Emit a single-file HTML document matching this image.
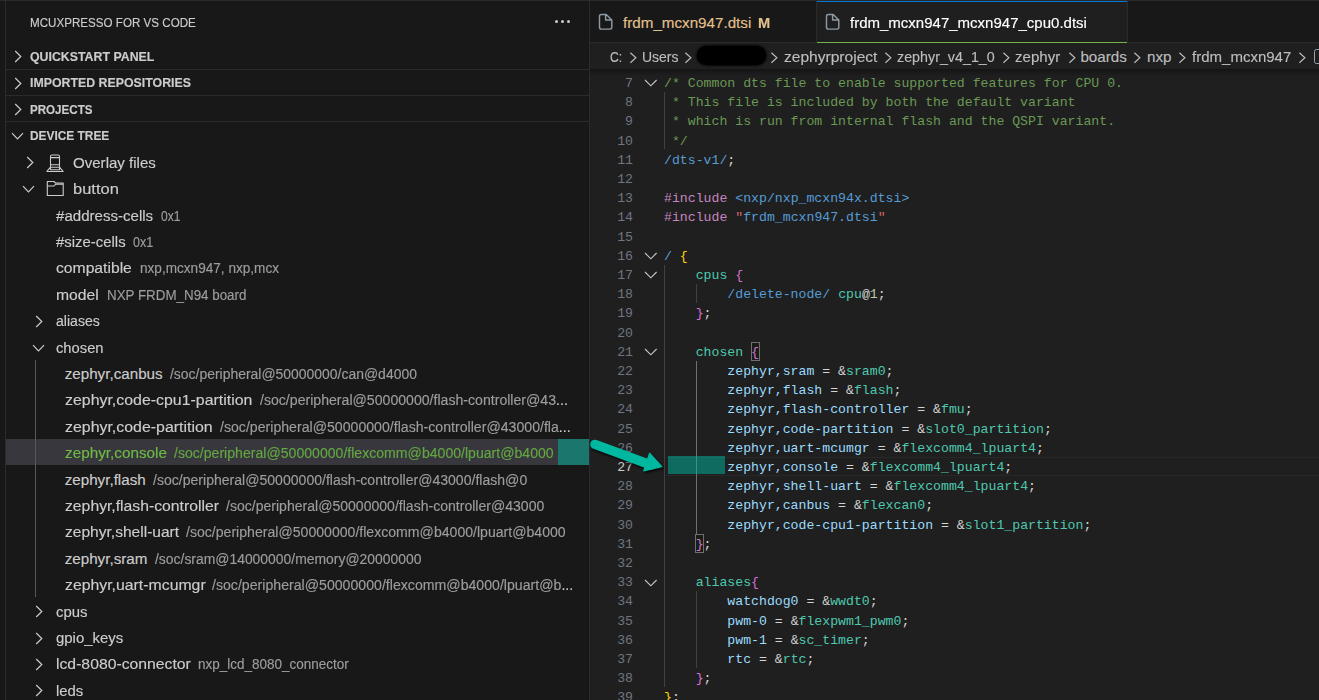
<!DOCTYPE html>
<html><head><meta charset="utf-8"><style>
*{margin:0;padding:0;box-sizing:border-box}
html,body{width:1319px;height:700px;overflow:hidden;background:#181818}
body{position:relative;font-family:"Liberation Sans",sans-serif;color:#cccccc}
.a{position:absolute;white-space:pre;-webkit-text-stroke:0.15px currentColor}
.code,.ln{-webkit-text-stroke:0}
.code{font-family:"Liberation Mono",monospace;font-size:13.2px;line-height:19.2px;color:#d4d4d4}
.ln{font-family:"Liberation Mono",monospace;font-size:13.2px;line-height:19.2px;color:#6e7681;text-align:right;width:40px}
.c{color:#6a9955}.k{color:#569cd6}.p{color:#c586c0}.s{color:#d16969}.t{color:#4ec9b0}.v{color:#9cdcfe}.n{color:#b5cea8}
.y{color:#ffd700}.o{color:#da70d6}
</style></head>
<body>
<div class="a" style="left:0;top:0;width:1319px;height:1px;background:#2b2b2b"></div>
<div class="a" style="left:5px;top:0;width:1px;height:700px;background:#2b2b2b"></div>
<div class="a" style="left:29.90px;top:13.00px;font-size:12.7px;line-height:20px;font-weight:normal;color:#cccccc;transform:scaleX(0.9153);transform-origin:0 0;">MCUXPRESSO FOR VS CODE</div>
<div class="a" style="left:554.80px;top:19.8px;width:3.2px;height:3.2px;border-radius:50%;background:#cccccc"></div>
<div class="a" style="left:560.90px;top:19.8px;width:3.2px;height:3.2px;border-radius:50%;background:#cccccc"></div>
<div class="a" style="left:567.00px;top:19.8px;width:3.2px;height:3.2px;border-radius:50%;background:#cccccc"></div>
<svg class="a" style="left:13.6px;top:50.2px" width="9" height="14" viewBox="0 0 9 14"><path d="M1.2 1 L6.8 6.5 L1.2 12" fill="none" stroke="#cccccc" stroke-width="1.2"/></svg>
<div class="a" style="left:29.50px;top:44.00px;font-size:12.4px;line-height:26.4px;font-weight:bold;color:#cccccc;transform:scaleX(0.9959);transform-origin:0 0;">QUICKSTART PANEL</div>
<div class="a" style="left:6px;top:68.6px;width:583px;height:1px;background:#2b2b2b"></div>
<svg class="a" style="left:13.6px;top:76.6px" width="9" height="14" viewBox="0 0 9 14"><path d="M1.2 1 L6.8 6.5 L1.2 12" fill="none" stroke="#cccccc" stroke-width="1.2"/></svg>
<div class="a" style="left:29.50px;top:70.40px;font-size:12.4px;line-height:26.4px;font-weight:bold;color:#cccccc;transform:scaleX(0.9964);transform-origin:0 0;">IMPORTED REPOSITORIES</div>
<div class="a" style="left:6px;top:95.0px;width:583px;height:1px;background:#2b2b2b"></div>
<svg class="a" style="left:13.6px;top:103.0px" width="9" height="14" viewBox="0 0 9 14"><path d="M1.2 1 L6.8 6.5 L1.2 12" fill="none" stroke="#cccccc" stroke-width="1.2"/></svg>
<div class="a" style="left:29.50px;top:96.80px;font-size:12.4px;line-height:26.4px;font-weight:bold;color:#cccccc;transform:scaleX(0.9351);transform-origin:0 0;">PROJECTS</div>
<div class="a" style="left:6px;top:121.4px;width:583px;height:1px;background:#2b2b2b"></div>
<svg class="a" style="left:10.8px;top:132.39999999999998px" width="14" height="9" viewBox="0 0 14 9"><path d="M1 1.2 L6.5 6.8 L12 1.2" fill="none" stroke="#cccccc" stroke-width="1.2"/></svg>
<div class="a" style="left:29.50px;top:123.20px;font-size:12.4px;line-height:26.4px;font-weight:bold;color:#cccccc;transform:scaleX(0.9591);transform-origin:0 0;">DEVICE TREE</div>
<svg class="a" style="left:26px;top:156.3px" width="9" height="14" viewBox="0 0 9 14"><path d="M1.2 1 L6.8 6.5 L1.2 12" fill="none" stroke="#cccccc" stroke-width="1.2"/></svg>
<svg class="a" style="left:46px;top:153.5px" width="18" height="19" viewBox="0 0 18 19"><path d="M6 0.9 H12 Q13.5 0.9 13.5 2.4 V15.8 H4.5 V2.4 Q4.5 0.9 6 0.9 Z M4.8 3.6 H13.2 M4.8 10.8 H13.2 M4.8 13.3 H13.2 M4.5 13.2 L0.9 17.4 H17.1 L13.5 13.2" fill="none" stroke="#cccccc" stroke-width="1.05" stroke-linejoin="round"/></svg>
<div class="a" style="left:72.50px;top:149.80px;font-size:15.2px;line-height:26.4px;font-weight:normal;color:#cccccc;transform:scaleX(0.9914);transform-origin:0 0;">Overlay files</div>
<svg class="a" style="left:22.2px;top:185.4px" width="14" height="9" viewBox="0 0 14 9"><path d="M1 1.2 L6.5 6.8 L12 1.2" fill="none" stroke="#cccccc" stroke-width="1.2"/></svg>
<svg class="a" style="left:46px;top:180.4px" width="18" height="17" viewBox="0 0 18 17"><path d="M1.3 1.5 H8 L9.5 3 H17.2 V15.5 H1.3 Z M1.3 6 H8 L9.5 4.3 H17.2" fill="none" stroke="#cccccc" stroke-width="1.1" stroke-linejoin="round"/></svg>
<div class="a" style="left:72.50px;top:176.20px;font-size:15.2px;line-height:26.4px;font-weight:normal;color:#cccccc;transform:scaleX(1.0862);transform-origin:0 0;">button</div>
<div class="a" style="left:55.70px;top:202.60px;font-size:15.2px;line-height:26.4px;font-weight:normal;color:#cccccc;transform:scaleX(0.9919);transform-origin:0 0;">#address-cells</div>
<div class="a" style="left:160.90px;top:202.60px;font-size:14px;line-height:26.4px;font-weight:normal;color:#9d9d9d;transform:scaleX(0.8596);transform-origin:0 0;">0x1</div>
<div class="a" style="left:55.70px;top:229.00px;font-size:15.2px;line-height:26.4px;font-weight:normal;color:#cccccc;transform:scaleX(0.9823);transform-origin:0 0;">#size-cells</div>
<div class="a" style="left:132.70px;top:229.00px;font-size:14px;line-height:26.4px;font-weight:normal;color:#9d9d9d;transform:scaleX(0.8951);transform-origin:0 0;">0x1</div>
<div class="a" style="left:55.70px;top:255.40px;font-size:15.2px;line-height:26.4px;font-weight:normal;color:#cccccc;transform:scaleX(1.0326);transform-origin:0 0;">compatible</div>
<div class="a" style="left:139.60px;top:255.40px;font-size:14px;line-height:26.4px;font-weight:normal;color:#9d9d9d;transform:scaleX(0.9708);transform-origin:0 0;">nxp,mcxn947, nxp,mcx</div>
<div class="a" style="left:55.70px;top:281.80px;font-size:15.2px;line-height:26.4px;font-weight:normal;color:#cccccc;transform:scaleX(1.0337);transform-origin:0 0;">model</div>
<div class="a" style="left:106.50px;top:281.80px;font-size:14px;line-height:26.4px;font-weight:normal;color:#9d9d9d;transform:scaleX(0.9547);transform-origin:0 0;">NXP FRDM_N94 board</div>
<svg class="a" style="left:34.5px;top:314.7px" width="9" height="14" viewBox="0 0 9 14"><path d="M1.2 1 L6.8 6.5 L1.2 12" fill="none" stroke="#cccccc" stroke-width="1.2"/></svg>
<div class="a" style="left:56.00px;top:308.20px;font-size:15.2px;line-height:26.4px;font-weight:normal;color:#cccccc;transform:scaleX(0.9257);transform-origin:0 0;">aliases</div>
<svg class="a" style="left:32px;top:343.79999999999995px" width="14" height="9" viewBox="0 0 14 9"><path d="M1 1.2 L6.5 6.8 L12 1.2" fill="none" stroke="#cccccc" stroke-width="1.2"/></svg>
<div class="a" style="left:55.70px;top:334.60px;font-size:15.2px;line-height:26.4px;font-weight:normal;color:#cccccc;transform:scaleX(0.9710);transform-origin:0 0;">chosen</div>
<div class="a" style="left:64.70px;top:361.00px;font-size:15.2px;line-height:26.4px;font-weight:normal;color:#cccccc;">zephyr,canbus</div>
<div class="a" style="left:170.10px;top:361.00px;font-size:14px;line-height:26.4px;font-weight:normal;color:#9d9d9d;transform:scaleX(0.9958);transform-origin:0 0;">/soc/peripheral@50000000/can@d4000</div>
<div class="a" style="left:64.70px;top:387.40px;font-size:15.2px;line-height:26.4px;font-weight:normal;color:#cccccc;transform:scaleX(1.0473);transform-origin:0 0;">zephyr,code-cpu1-partition</div>
<div class="a" style="left:259.60px;top:387.40px;font-size:14px;line-height:26.4px;font-weight:normal;color:#9d9d9d;transform:scaleX(1.0076);transform-origin:0 0;">/soc/peripheral@50000000/flash-controller@43<span style="color:#cccccc">...</span></div>
<div class="a" style="left:64.70px;top:413.80px;font-size:15.2px;line-height:26.4px;font-weight:normal;color:#cccccc;transform:scaleX(1.0475);transform-origin:0 0;">zephyr,code-partition</div>
<div class="a" style="left:219.80px;top:413.80px;font-size:14px;line-height:26.4px;font-weight:normal;color:#9d9d9d;transform:scaleX(1.0089);transform-origin:0 0;">/soc/peripheral@50000000/flash-controller@43000/fla<span style="color:#cccccc">...</span></div>
<div class="a" style="left:6px;top:438.9px;width:583px;height:26.6px;background:#37373d"></div>
<div class="a" style="left:65.00px;top:440.20px;font-size:15.2px;line-height:26.4px;font-weight:normal;color:#6fbb45;transform:scaleX(1.0059);transform-origin:0 0;">zephyr,console</div>
<div class="a" style="left:174.30px;top:440.20px;font-size:14px;line-height:26.4px;font-weight:normal;color:#64a742;transform:scaleX(1.0063);transform-origin:0 0;">/soc/peripheral@50000000/flexcomm@b4000/lpuart@b4000</div>
<div class="a" style="left:64.70px;top:466.60px;font-size:15.2px;line-height:26.4px;font-weight:normal;color:#cccccc;">zephyr,flash</div>
<div class="a" style="left:153.30px;top:466.60px;font-size:14px;line-height:26.4px;font-weight:normal;color:#9d9d9d;transform:scaleX(1.0042);transform-origin:0 0;">/soc/peripheral@50000000/flash-controller@43000/flash@0</div>
<div class="a" style="left:64.70px;top:493.00px;font-size:15.2px;line-height:26.4px;font-weight:normal;color:#cccccc;transform:scaleX(1.0364);transform-origin:0 0;">zephyr,flash-controller</div>
<div class="a" style="left:225.90px;top:493.00px;font-size:14px;line-height:26.4px;font-weight:normal;color:#9d9d9d;transform:scaleX(1.0036);transform-origin:0 0;">/soc/peripheral@50000000/flash-controller@43000</div>
<div class="a" style="left:64.70px;top:519.40px;font-size:15.2px;line-height:26.4px;font-weight:normal;color:#cccccc;transform:scaleX(1.0240);transform-origin:0 0;">zephyr,shell-uart</div>
<div class="a" style="left:186.30px;top:519.40px;font-size:14px;line-height:26.4px;font-weight:normal;color:#9d9d9d;transform:scaleX(1.0063);transform-origin:0 0;">/soc/peripheral@50000000/flexcomm@b4000/lpuart@b4000</div>
<div class="a" style="left:64.70px;top:545.80px;font-size:15.2px;line-height:26.4px;font-weight:normal;color:#cccccc;">zephyr,sram</div>
<div class="a" style="left:154.70px;top:545.80px;font-size:14px;line-height:26.4px;font-weight:normal;color:#9d9d9d;transform:scaleX(0.9936);transform-origin:0 0;">/soc/sram@14000000/memory@20000000</div>
<div class="a" style="left:64.70px;top:572.20px;font-size:15.2px;line-height:26.4px;font-weight:normal;color:#cccccc;transform:scaleX(1.0417);transform-origin:0 0;">zephyr,uart-mcumgr</div>
<div class="a" style="left:212.30px;top:572.20px;font-size:14px;line-height:26.4px;font-weight:normal;color:#9d9d9d;transform:scaleX(1.0094);transform-origin:0 0;">/soc/peripheral@50000000/flexcomm@b4000/lpuart@b<span style="color:#cccccc">...</span></div>
<svg class="a" style="left:34.5px;top:605.0999999999999px" width="9" height="14" viewBox="0 0 9 14"><path d="M1.2 1 L6.8 6.5 L1.2 12" fill="none" stroke="#cccccc" stroke-width="1.2"/></svg>
<div class="a" style="left:55.50px;top:598.60px;font-size:15.2px;line-height:26.4px;font-weight:normal;color:#cccccc;transform:scaleX(0.9812);transform-origin:0 0;">cpus</div>
<svg class="a" style="left:34.5px;top:631.5px" width="9" height="14" viewBox="0 0 9 14"><path d="M1.2 1 L6.8 6.5 L1.2 12" fill="none" stroke="#cccccc" stroke-width="1.2"/></svg>
<div class="a" style="left:55.50px;top:625.00px;font-size:15.2px;line-height:26.4px;font-weight:normal;color:#cccccc;transform:scaleX(0.9833);transform-origin:0 0;">gpio_keys</div>
<svg class="a" style="left:34.5px;top:657.8999999999999px" width="9" height="14" viewBox="0 0 9 14"><path d="M1.2 1 L6.8 6.5 L1.2 12" fill="none" stroke="#cccccc" stroke-width="1.2"/></svg>
<div class="a" style="left:55.50px;top:651.40px;font-size:15.2px;line-height:26.4px;font-weight:normal;color:#cccccc;transform:scaleX(1.0367);transform-origin:0 0;">lcd-8080-connector</div>
<div class="a" style="left:198.00px;top:651.40px;font-size:14px;line-height:26.4px;font-weight:normal;color:#9d9d9d;transform:scaleX(0.9632);transform-origin:0 0;">nxp_lcd_8080_connector</div>
<svg class="a" style="left:34.5px;top:684.3px" width="9" height="14" viewBox="0 0 9 14"><path d="M1.2 1 L6.8 6.5 L1.2 12" fill="none" stroke="#cccccc" stroke-width="1.2"/></svg>
<div class="a" style="left:55.50px;top:677.80px;font-size:15.2px;line-height:26.4px;font-weight:normal;color:#cccccc;transform:scaleX(0.9793);transform-origin:0 0;">leds</div>
<div class="a" style="left:35px;top:359.7px;width:1px;height:237.6px;background:#585858"></div>
<div class="a" style="left:589px;top:0;width:1px;height:700px;background:#2b2b2b"></div>
<div class="a" style="left:590px;top:1px;width:729px;height:41px;background:#181818"></div>
<div class="a" style="left:590px;top:42px;width:729px;height:1px;background:#2b2b2b"></div>
<svg class="a" style="left:598.2px;top:12.5px" width="16" height="19" viewBox="0 0 16 19"><path d="M3.3 1.4 H8.2 L13.8 7 V14.3 Q13.8 16.1 12 16.1 H3.3 Q1.5 16.1 1.5 14.3 V3.2 Q1.5 1.4 3.3 1.4 Z M7.6 1.4 V6.9 H13.8" fill="none" stroke="#8d9aa3" stroke-width="1.45" stroke-linejoin="round"/></svg>
<div class="a" style="left:623.00px;top:1.00px;font-size:15.2px;line-height:43px;font-weight:normal;color:#e2c08d;">frdm_mcxn947.dtsi</div>
<div class="a" style="left:758.40px;top:1.00px;font-size:15px;line-height:43px;font-weight:bold;color:#e2c08d;transform:scaleX(0.9764);transform-origin:0 0;">M</div>
<div class="a" style="left:816px;top:1px;width:312px;height:42px;background:#1f1f1f;border-left:1px solid #2b2b2b;border-right:1px solid #2b2b2b"></div>
<div class="a" style="left:817px;top:0.6px;width:310px;height:1.6px;background:#0078d4"></div>
<div class="a" style="left:817px;top:41.6px;width:310px;height:1.6px;background:#73b54a"></div>
<svg class="a" style="left:825.2px;top:12.5px" width="16" height="19" viewBox="0 0 16 19"><path d="M3.3 1.4 H8.2 L13.8 7 V14.3 Q13.8 16.1 12 16.1 H3.3 Q1.5 16.1 1.5 14.3 V3.2 Q1.5 1.4 3.3 1.4 Z M7.6 1.4 V6.9 H13.8" fill="none" stroke="#8d9aa3" stroke-width="1.45" stroke-linejoin="round"/></svg>
<div class="a" style="left:850.30px;top:1.00px;font-size:15.2px;line-height:43px;font-weight:normal;color:#ffffff;transform:scaleX(0.9881);transform-origin:0 0;">frdm_mcxn947_mcxn947_cpu0.dtsi</div>
<div class="a" style="left:590px;top:43px;width:729px;height:657px;background:#1f1f1f"></div>
<div class="a" style="left:609.50px;top:44.00px;font-size:15.2px;line-height:26px;font-weight:normal;color:#bdbdbd;transform:scaleX(0.8000);transform-origin:0 0;">C:</div>
<div class="a" style="left:642.00px;top:44.00px;font-size:15.2px;line-height:26px;font-weight:normal;color:#bdbdbd;transform:scaleX(0.9197);transform-origin:0 0;">Users</div>
<div class="a" style="left:784.00px;top:44.00px;font-size:15.2px;line-height:26px;font-weight:normal;color:#bdbdbd;transform:scaleX(1.0247);transform-origin:0 0;">zephyrproject</div>
<div class="a" style="left:897.00px;top:44.00px;font-size:15.2px;line-height:26px;font-weight:normal;color:#bdbdbd;transform:scaleX(0.9409);transform-origin:0 0;">zephyr_v4_1_0</div>
<div class="a" style="left:1014.80px;top:44.00px;font-size:15.2px;line-height:26px;font-weight:normal;color:#bdbdbd;transform:scaleX(0.9909);transform-origin:0 0;">zephyr</div>
<div class="a" style="left:1080.40px;top:44.00px;font-size:15.2px;line-height:26px;font-weight:normal;color:#bdbdbd;">boards</div>
<div class="a" style="left:1147.00px;top:44.00px;font-size:15.2px;line-height:26px;font-weight:normal;color:#bdbdbd;">nxp</div>
<div class="a" style="left:1191.70px;top:44.00px;font-size:15.2px;line-height:26px;font-weight:normal;color:#bdbdbd;transform:scaleX(0.9887);transform-origin:0 0;">frdm_mcxn947</div>
<svg class="a" style="left:628.5px;top:52px" width="9" height="12" viewBox="0 0 9 12"><path d="M1.4 0.8 L6.9 5.8 L1.4 10.8" fill="none" stroke="#bdbdbd" stroke-width="1.15"/></svg>
<svg class="a" style="left:684.0px;top:52px" width="9" height="12" viewBox="0 0 9 12"><path d="M1.4 0.8 L6.9 5.8 L1.4 10.8" fill="none" stroke="#bdbdbd" stroke-width="1.15"/></svg>
<svg class="a" style="left:769.5px;top:52px" width="9" height="12" viewBox="0 0 9 12"><path d="M1.4 0.8 L6.9 5.8 L1.4 10.8" fill="none" stroke="#bdbdbd" stroke-width="1.15"/></svg>
<svg class="a" style="left:884.0px;top:52px" width="9" height="12" viewBox="0 0 9 12"><path d="M1.4 0.8 L6.9 5.8 L1.4 10.8" fill="none" stroke="#bdbdbd" stroke-width="1.15"/></svg>
<svg class="a" style="left:1001.5px;top:52px" width="9" height="12" viewBox="0 0 9 12"><path d="M1.4 0.8 L6.9 5.8 L1.4 10.8" fill="none" stroke="#bdbdbd" stroke-width="1.15"/></svg>
<svg class="a" style="left:1067.5px;top:52px" width="9" height="12" viewBox="0 0 9 12"><path d="M1.4 0.8 L6.9 5.8 L1.4 10.8" fill="none" stroke="#bdbdbd" stroke-width="1.15"/></svg>
<svg class="a" style="left:1133.2px;top:52px" width="9" height="12" viewBox="0 0 9 12"><path d="M1.4 0.8 L6.9 5.8 L1.4 10.8" fill="none" stroke="#bdbdbd" stroke-width="1.15"/></svg>
<svg class="a" style="left:1177.5px;top:52px" width="9" height="12" viewBox="0 0 9 12"><path d="M1.4 0.8 L6.9 5.8 L1.4 10.8" fill="none" stroke="#bdbdbd" stroke-width="1.15"/></svg>
<svg class="a" style="left:1297.7px;top:52px" width="9" height="12" viewBox="0 0 9 12"><path d="M1.4 0.8 L6.9 5.8 L1.4 10.8" fill="none" stroke="#bdbdbd" stroke-width="1.15"/></svg>
<div class="a" style="left:697px;top:45.5px;width:69px;height:19px;border-radius:9.5px;background:#000;box-shadow:0 0 2px 1px rgba(0,0,0,.8)"></div>
<div class="a" style="left:1314px;top:49px;width:10px;height:15px;border:1.5px solid #9aa5ad;border-radius:2.5px"></div>
<div class="a" style="left:590px;top:69px;width:729px;height:7px;background:linear-gradient(#141414,#1f1f1f)"></div>
<div class="a" style="left:664px;top:456.5px;width:655px;height:19.2px;border-top:1px solid #282828;border-bottom:1px solid #282828"></div>
<div class="a" style="left:664px;top:91.7px;width:1px;height:57.6px;background:#404040"></div>
<div class="a" style="left:664px;top:264.5px;width:1px;height:422.4px;background:#404040"></div>
<div class="a" style="left:696px;top:283.7px;width:1px;height:19.2px;background:#404040"></div>
<div class="a" style="left:696px;top:360.5px;width:1px;height:173.8px;background:#707070"></div>
<div class="a" style="left:696px;top:590.9px;width:1px;height:76.8px;background:#404040"></div>
<div class="a" style="left:750.6px;top:342.0px;width:9px;height:18.9px;border:1px solid #6f6f6f;background:#161e16"></div>
<div class="a" style="left:695.1px;top:534.0px;width:9px;height:18.9px;border:1px solid #6f6f6f;background:#161e16"></div>
<div class="a ln" style="left:593px;top:74.0px;color:#6e7681">7</div>
<div class="a code" style="left:664px;top:74.0px"><span class="c">/* Common dts file to enable supported features for CPU 0.</span></div>
<div class="a ln" style="left:593px;top:93.2px;color:#6e7681">8</div>
<div class="a code" style="left:664px;top:93.2px"><span class="c"> * This file is included by both the default variant</span></div>
<div class="a ln" style="left:593px;top:112.4px;color:#6e7681">9</div>
<div class="a code" style="left:664px;top:112.4px"><span class="c"> * which is run from internal flash and the QSPI variant.</span></div>
<div class="a ln" style="left:593px;top:131.6px;color:#6e7681">10</div>
<div class="a code" style="left:664px;top:131.6px"><span class="c"> */</span></div>
<div class="a ln" style="left:593px;top:150.8px;color:#6e7681">11</div>
<div class="a code" style="left:664px;top:150.8px"><span class="k">/dts-v1/</span>;</div>
<div class="a ln" style="left:593px;top:170.0px;color:#6e7681">12</div>
<div class="a code" style="left:664px;top:170.0px"></div>
<div class="a ln" style="left:593px;top:189.2px;color:#6e7681">13</div>
<div class="a code" style="left:664px;top:189.2px"><span class="p">#include</span> <span class="k">&lt;nxp/nxp_mcxn94x.dtsi&gt;</span></div>
<div class="a ln" style="left:593px;top:208.4px;color:#6e7681">14</div>
<div class="a code" style="left:664px;top:208.4px"><span class="p">#include</span> <span class="s">&quot;</span><span class="k">frdm_mcxn947.dtsi</span><span class="s">&quot;</span></div>
<div class="a ln" style="left:593px;top:227.6px;color:#6e7681">15</div>
<div class="a code" style="left:664px;top:227.6px"></div>
<div class="a ln" style="left:593px;top:246.8px;color:#6e7681">16</div>
<div class="a code" style="left:664px;top:246.8px"><span class="k">/</span> <span class="y">{</span></div>
<div class="a ln" style="left:593px;top:266.0px;color:#6e7681">17</div>
<div class="a code" style="left:664px;top:266.0px">    <span class="t">cpus</span> <span class="o">{</span></div>
<div class="a ln" style="left:593px;top:285.2px;color:#6e7681">18</div>
<div class="a code" style="left:664px;top:285.2px">        <span class="k">/delete-node/</span> <span class="t">cpu</span>@<span class="n">1</span>;</div>
<div class="a ln" style="left:593px;top:304.4px;color:#6e7681">19</div>
<div class="a code" style="left:664px;top:304.4px">    <span class="o">}</span>;</div>
<div class="a ln" style="left:593px;top:323.6px;color:#6e7681">20</div>
<div class="a code" style="left:664px;top:323.6px"></div>
<div class="a ln" style="left:593px;top:342.8px;color:#6e7681">21</div>
<div class="a code" style="left:664px;top:342.8px">    <span class="t">chosen</span> <span class="o">{</span></div>
<div class="a ln" style="left:593px;top:362.0px;color:#6e7681">22</div>
<div class="a code" style="left:664px;top:362.0px">        <span class="v">zephyr,sram</span> = &amp;<span class="t">sram0</span>;</div>
<div class="a ln" style="left:593px;top:381.2px;color:#6e7681">23</div>
<div class="a code" style="left:664px;top:381.2px">        <span class="v">zephyr,flash</span> = &amp;<span class="t">flash</span>;</div>
<div class="a ln" style="left:593px;top:400.4px;color:#6e7681">24</div>
<div class="a code" style="left:664px;top:400.4px">        <span class="v">zephyr,flash-controller</span> = &amp;<span class="t">fmu</span>;</div>
<div class="a ln" style="left:593px;top:419.6px;color:#6e7681">25</div>
<div class="a code" style="left:664px;top:419.6px">        <span class="v">zephyr,code-partition</span> = &amp;<span class="t">slot0_partition</span>;</div>
<div class="a ln" style="left:593px;top:438.8px;color:#6e7681">26</div>
<div class="a code" style="left:664px;top:438.8px">        <span class="v">zephyr,uart-mcumgr</span> = &amp;<span class="t">flexcomm4_lpuart4</span>;</div>
<div class="a ln" style="left:593px;top:458.0px;color:#cccccc">27</div>
<div class="a code" style="left:664px;top:458.0px">        <span class="v">zephyr,console</span> = &amp;<span class="t">flexcomm4_lpuart4</span>;</div>
<div class="a ln" style="left:593px;top:477.2px;color:#6e7681">28</div>
<div class="a code" style="left:664px;top:477.2px">        <span class="v">zephyr,shell-uart</span> = &amp;<span class="t">flexcomm4_lpuart4</span>;</div>
<div class="a ln" style="left:593px;top:496.4px;color:#6e7681">29</div>
<div class="a code" style="left:664px;top:496.4px">        <span class="v">zephyr,canbus</span> = &amp;<span class="t">flexcan0</span>;</div>
<div class="a ln" style="left:593px;top:515.6px;color:#6e7681">30</div>
<div class="a code" style="left:664px;top:515.6px">        <span class="v">zephyr,code-cpu1-partition</span> = &amp;<span class="t">slot1_partition</span>;</div>
<div class="a ln" style="left:593px;top:534.8px;color:#6e7681">31</div>
<div class="a code" style="left:664px;top:534.8px">    <span class="o">}</span>;</div>
<div class="a ln" style="left:593px;top:554.0px;color:#6e7681">32</div>
<div class="a code" style="left:664px;top:554.0px"></div>
<div class="a ln" style="left:593px;top:573.2px;color:#6e7681">33</div>
<div class="a code" style="left:664px;top:573.2px">    <span class="t">aliases</span><span class="o">{</span></div>
<div class="a ln" style="left:593px;top:592.4px;color:#6e7681">34</div>
<div class="a code" style="left:664px;top:592.4px">        <span class="v">watchdog0</span> = &amp;<span class="t">wwdt0</span>;</div>
<div class="a ln" style="left:593px;top:611.6px;color:#6e7681">35</div>
<div class="a code" style="left:664px;top:611.6px">        <span class="v">pwm-0</span> = &amp;<span class="t">flexpwm1_pwm0</span>;</div>
<div class="a ln" style="left:593px;top:630.8px;color:#6e7681">36</div>
<div class="a code" style="left:664px;top:630.8px">        <span class="v">pwm-1</span> = &amp;<span class="t">sc_timer</span>;</div>
<div class="a ln" style="left:593px;top:650.0px;color:#6e7681">37</div>
<div class="a code" style="left:664px;top:650.0px">        <span class="v">rtc</span> = &amp;<span class="t">rtc</span>;</div>
<div class="a ln" style="left:593px;top:669.2px;color:#6e7681">38</div>
<div class="a code" style="left:664px;top:669.2px">    <span class="o">}</span>;</div>
<div class="a ln" style="left:593px;top:688.4px;color:#6e7681">39</div>
<div class="a code" style="left:664px;top:688.4px"><span class="y">}</span>;</div>
<svg class="a" style="left:644px;top:79.3px" width="14" height="8" viewBox="0 0 14 8"><path d="M1 1 L6.8 6.8 L12.6 1" fill="none" stroke="#c5c5c5" stroke-width="1.15"/></svg>
<svg class="a" style="left:644px;top:252.1px" width="14" height="8" viewBox="0 0 14 8"><path d="M1 1 L6.8 6.8 L12.6 1" fill="none" stroke="#c5c5c5" stroke-width="1.15"/></svg>
<svg class="a" style="left:644px;top:271.3px" width="14" height="8" viewBox="0 0 14 8"><path d="M1 1 L6.8 6.8 L12.6 1" fill="none" stroke="#c5c5c5" stroke-width="1.15"/></svg>
<svg class="a" style="left:644px;top:348.1px" width="14" height="8" viewBox="0 0 14 8"><path d="M1 1 L6.8 6.8 L12.6 1" fill="none" stroke="#c5c5c5" stroke-width="1.15"/></svg>
<svg class="a" style="left:644px;top:578.5px" width="14" height="8" viewBox="0 0 14 8"><path d="M1 1 L6.8 6.8 L12.6 1" fill="none" stroke="#c5c5c5" stroke-width="1.15"/></svg>
<div class="a" style="left:558px;top:439px;width:31px;height:26.4px;background:rgba(0,184,160,0.5)"></div>
<div class="a" style="left:668px;top:456.2px;width:57px;height:17.8px;background:rgba(0,184,160,0.5)"></div>
<svg class="a" style="left:580px;top:425px;overflow:visible" width="100" height="60" viewBox="580 425 100 60"><defs><filter id="sh" x="-30%" y="-30%" width="160%" height="160%"><feGaussianBlur stdDeviation="1.2"/></filter></defs><g transform="translate(1.2,1.8)" filter="url(#sh)" opacity="0.75"><path d="M595 444.4 L651 465" stroke="#000" stroke-width="9.5" stroke-linecap="round"/><path d="M649.6 453.2 L661.8 466.6 L643.8 470.8 Z" fill="#000" stroke="#000" stroke-width="1.2" stroke-linejoin="round"/></g><path d="M595 444.4 L651 465" stroke="#00b8a0" stroke-width="9.5" stroke-linecap="round"/><path d="M649.6 453.2 L661.8 466.6 L643.8 470.8 Z" fill="#00b8a0" stroke="#00b8a0" stroke-width="1.2" stroke-linejoin="round"/></svg>
</body></html>
